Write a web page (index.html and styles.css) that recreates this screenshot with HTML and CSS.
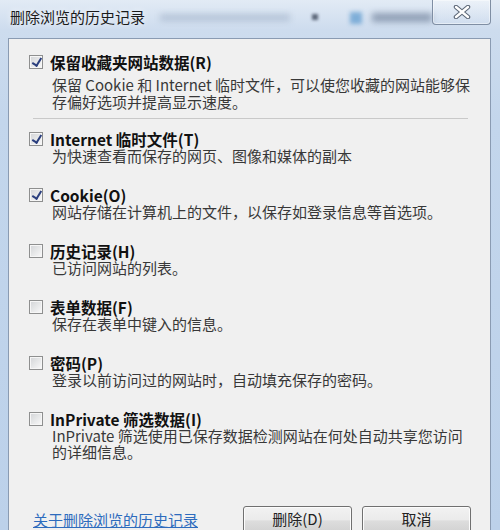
FILE: index.html
```html
<!DOCTYPE html>
<html lang="zh-CN">
<head>
    <meta charset="UTF-8">
    <title>删除浏览的历史记录</title>
    <link rel="stylesheet" href="styles.css">
</head>
<body>
    <div class="window">
        <div class="titlebar">
            <span class="title">删除浏览的历史记录</span>
            <span class="blur blur-menu"></span>
            <span class="blur blur-arrow"></span>
            <span class="blur blur-icon"></span>
            <span class="blur blur-text"></span>
            <button class="close" aria-label="关闭">
                <svg width="18" height="14" viewBox="0 0 18 14">
                    <path d="M3 2 L15 12 M15 2 L3 12" stroke="#5b6676" stroke-width="4.5" stroke-linecap="round"/>
                    <path d="M3 2 L15 12 M15 2 L3 12" stroke="#ffffff" stroke-width="2.4" stroke-linecap="round"/>
                </svg>
            </button>
        </div>

        <div class="panel">
            <div class="option first">
                <label class="option-label"><span class="box checked"></span>保留收藏夹网站数据(R)</label>
                <p class="desc">保留 Cookie 和 Internet 临时文件，可以使您收藏的网站能够保<br>存偏好选项并提高显示速度。</p>
            </div>

            <hr class="sep">

            <div class="option">
                <label class="option-label"><span class="box checked"></span>Internet 临时文件(T)</label>
                <p class="desc">为快速查看而保存的网页、图像和媒体的副本</p>
            </div>

            <div class="option">
                <label class="option-label"><span class="box checked"></span>Cookie(O)</label>
                <p class="desc">网站存储在计算机上的文件，以保存如登录信息等首选项。</p>
            </div>

            <div class="option">
                <label class="option-label"><span class="box"></span>历史记录(H)</label>
                <p class="desc">已访问网站的列表。</p>
            </div>

            <div class="option">
                <label class="option-label"><span class="box"></span>表单数据(F)</label>
                <p class="desc">保存在表单中键入的信息。</p>
            </div>

            <div class="option">
                <label class="option-label"><span class="box"></span>密码(P)</label>
                <p class="desc">登录以前访问过的网站时，自动填充保存的密码。</p>
            </div>

            <div class="option">
                <label class="option-label"><span class="box"></span>InPrivate 筛选数据(I)</label>
                <p class="desc">InPrivate 筛选使用已保存数据检测网站在何处自动共享您访问<br>的详细信息。</p>
            </div>

            <div class="footer">
                <a class="help" href="#">关于删除浏览的历史记录</a>
                <div class="buttons">
                    <button class="btn">删除(D)</button>
                    <button class="btn">取消</button>
                </div>
            </div>
        </div>
    </div>
</body>
</html>
```

FILE: styles.css
```css
body {
    margin: 0;
    font-family: "Noto Sans CJK SC", "Microsoft YaHei", sans-serif;
}

.window {
    width: 500px;
    height: 530px;
    overflow: hidden;
    background: linear-gradient(180deg, #e2ebf5 0%, #cddcee 30px, #c3d6ec 120px, #bcd1ea 100%);
}

/* title bar */
.titlebar {
    position: relative;
    height: 38px;
    display: flex;
    justify-content: space-between;
    align-items: flex-start;
}

.title {
    padding-left: 10px;
    line-height: 34px;
    font-size: 15px;
    color: #1b1b1b;
    text-shadow: 0 0 6px rgba(255, 255, 255, 0.9);
}

.blur {
    position: absolute;
    filter: blur(3px);
}

.blur-menu {
    left: 160px;
    top: 14px;
    width: 130px;
    height: 7px;
    background: rgba(120, 140, 170, 0.35);
}

.blur-arrow {
    left: 312px;
    top: 14px;
    width: 6px;
    height: 6px;
    background: rgba(40, 50, 70, 0.7);
    filter: blur(1.5px);
}

.blur-icon {
    left: 350px;
    top: 12px;
    width: 12px;
    height: 12px;
    background: rgba(70, 140, 200, 0.6);
    filter: blur(2px);
}

.blur-text {
    left: 372px;
    top: 13px;
    width: 60px;
    height: 9px;
    background: rgba(60, 80, 110, 0.45);
}

.close {
    position: relative;
    width: 59px;
    height: 25px;
    margin-right: 9px;
    padding: 0;
    border: 1px solid #7f8ea3;
    border-top: none;
    border-radius: 0 0 4px 4px;
    background: linear-gradient(180deg, rgba(255,255,255,0.35), rgba(200,215,235,0.2));
    box-shadow: inset 0 0 0 1px rgba(255,255,255,0.45);
    display: flex;
    align-items: center;
    justify-content: center;
}

/* content */
.panel {
    box-sizing: border-box;
    width: 483px;
    height: 492px;
    margin-left: 8px;
    padding: 14px 0 0 20px;
    background: #f0f0f0;
    border: 1px solid #8a9bb2;
    border-bottom: none;
}

.option {
    margin-top: 22px;
}

.option.first {
    margin-top: 0;
}

.sep + .option {
    margin-top: 11px;
}

.option-label {
    display: flex;
    align-items: center;
    height: 18px;
    font-size: 15.5px;
    font-weight: bold;
    color: #111;
}

.box {
    box-sizing: border-box;
    width: 14px;
    height: 14px;
    margin-right: 7px;
    border: 1px solid #8e8f8f;
    background: linear-gradient(135deg, #d2d4d7 0%, #e8e9ea 55%, #fafafa 100%);
    box-shadow: inset 0 0 0 1px #f6f6f6;
}

.box.checked {
    position: relative;
}

.box.checked::after {
    content: "";
    position: absolute;
    left: 3.5px;
    top: -0.5px;
    width: 3.5px;
    height: 8px;
    border: solid #2b3f7e;
    border-width: 0 2.2px 2.2px 0;
    transform: rotate(32deg);
}

.desc {
    margin: 0;
    padding-left: 23px;
    font-size: 15px;
    line-height: 16px;
    color: #383838;
}

.first .desc {
    margin-top: 5px;
    line-height: 17px;
}

.sep {
    width: 435px;
    margin: 8px 0 0 4px;
    border: none;
    border-top: 1px solid #c9c9c9;
    height: 0;
}

/* footer */
.footer {
    display: flex;
    align-items: center;
    justify-content: space-between;
    margin-top: 46px;
    padding: 0 19px 0 4px;
}

.help {
    font-size: 15px;
    color: #2d6bbd;
    text-decoration: underline;
    margin-top: -3px;
}

.buttons {
    display: flex;
    gap: 10px;
}

.btn {
    width: 109px;
    height: 30px;
    padding: 0 0 6px;
    border: 1px solid #707070;
    border-radius: 3px;
    background: linear-gradient(180deg, #f2f2f2 0%, #ebebeb 45%, #dddddd 50%, #cfcfcf 100%);
    box-shadow: inset 0 0 0 1px #fcfcfc;
    font-family: inherit;
    font-size: 15px;
    color: #222;
}
```
